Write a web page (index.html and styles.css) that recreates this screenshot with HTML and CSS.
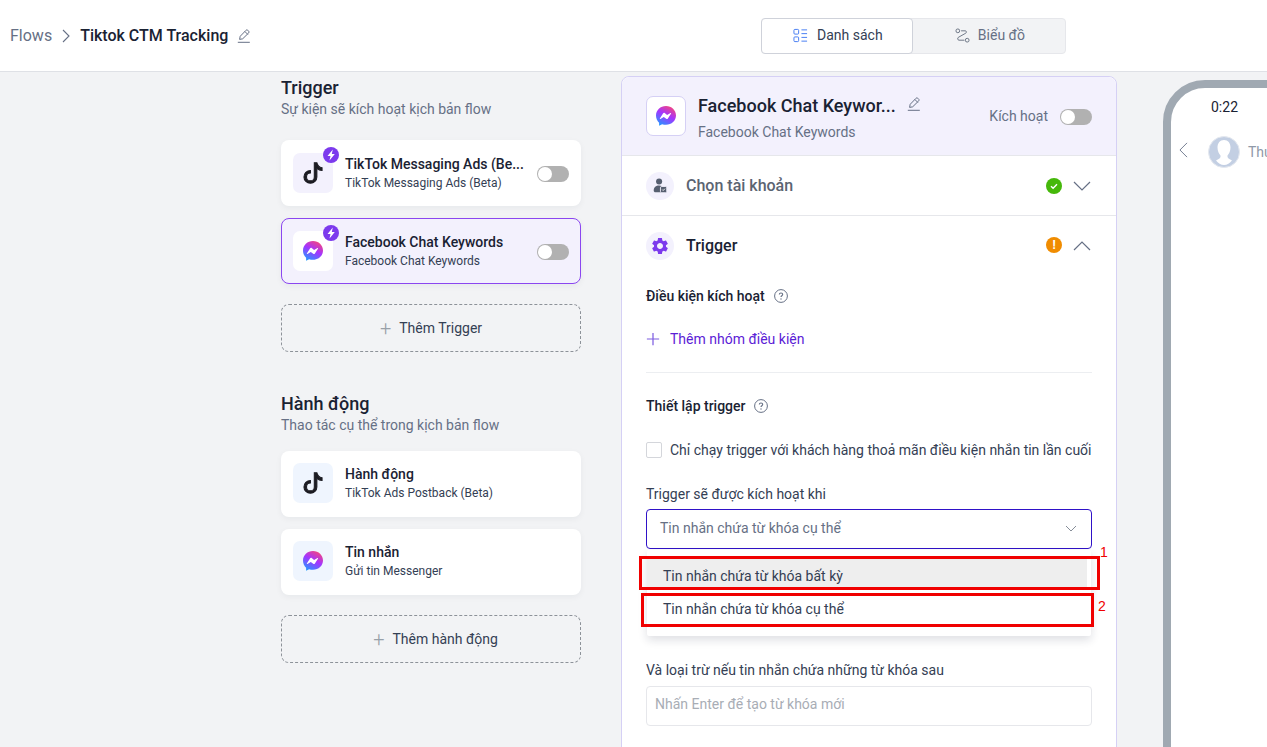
FILE: index.html
```html
<!DOCTYPE html>
<html lang="vi">
<head>
<meta charset="utf-8">
<title>Tiktok CTM Tracking</title>
<link rel="stylesheet" href="styles.css">
</head>
<body>
<svg class="defs" aria-hidden="true">
  <defs>
    <linearGradient id="mg" x1="0.75" y1="0" x2="0.2" y2="1">
      <stop offset="0" stop-color="#f5467c"/>
      <stop offset="0.45" stop-color="#a533ff"/>
      <stop offset="1" stop-color="#1f9bff"/>
    </linearGradient>
    <symbol id="messenger" viewBox="0 0 20 20">
      <path fill="url(#mg)" d="M10 0C4.4 0 0 4.1 0 9.6c0 2.9 1.2 5.4 3.1 7.1v3.1l3-1.6c1.2.4 2.5.6 3.9.6 5.600 0 10-4.100 10-9.200C20 4.100 15.600 0 10 0z"/>
      <path fill="#fff" d="M3.800 12.400l3.200-5c.4-.6 1.200-.7 1.700-.3l2.400 1.800 3.400-1.900c.4-.2.8.2.6.5l-3.200 5c-.4.6-1.200.7-1.700.3L7.800 11l-3.400 1.900c-.4.2-.8-.2-.6-.5z"/>
    </symbol>
    <symbol id="tiktok" viewBox="-0.5 -0.5 17 17">
      <path d="M9 0h1.980c.144.715.54 1.617 1.235 2.512C12.895 3.389 13.797 4 15 4v2c-1.753 0-3.070-.814-4-1.829V11a5 5 0 1 1-5-5v2a3 3 0 1 0 3 3V0Z"/>
    </symbol>
    <symbol id="bolt" viewBox="0 0 16 16">
      <circle cx="8" cy="8" r="8" fill="#7c3aed"/>
      <path fill="#fff" d="M9.800 2.500L4.500 9h3l-1 4.500L11.800 7H8.800l1-4.500z"/>
    </symbol>
    <symbol id="pencil" viewBox="0 0 14 14">
      <path fill="none" stroke="currentColor" stroke-width="1" d="M2.600 10.400L3.200 7.300 9 1.300c.6-.6 1.200-.6 1.700-.1l1 1c.5.5.5 1.200 0 1.700L5.700 9.800zM7.900 2.500l3 3M.8 13.300h12"/>
    </symbol>
    <symbol id="help" viewBox="0 0 14 14">
      <circle cx="7" cy="7" r="6.400" fill="none" stroke="currentColor" stroke-width="1"/>
      <path fill="none" stroke="currentColor" stroke-width="1.100" d="M5.300 5.600c0-1 .8-1.600 1.700-1.600s1.700.6 1.700 1.500c0 1.200-1.700 1.300-1.700 2.500"/>
      <circle cx="7" cy="10" r=".7" fill="currentColor"/>
    </symbol>
    <symbol id="gear" viewBox="0 0 24 24">
      <path d="M19.140 12.940c.04-.3.06-.61.06-.94 0-.32-.02-.64-.07-.94l2.030-1.580c.18-.14.23-.41.12-.61l-1.920-3.320c-.12-.22-.37-.29-.59-.22l-2.390.96c-.5-.38-1.030-.7-1.620-.94l-.36-2.540c-.04-.24-.24-.41-.48-.41h-3.840c-.24 0-.43.17-.47.41l-.36 2.540c-.59.24-1.130.57-1.620.94l-2.390-.96c-.22-.08-.47 0-.59.22L2.740 8.870c-.12.21-.08.47.12.61l2.030 1.580c-.05.3-.09.63-.09.94s.02.64.07.94l-2.030 1.580c-.18.14-.23.41-.12.61l1.920 3.320c.12.22.37.29.59.22l2.390-.96c.5.38 1.030.7 1.620.94l.36 2.540c.05.24.24.41.48.41h3.840c.24 0 .44-.17.47-.41l.36-2.540c.59-.24 1.130-.56 1.620-.94l2.390.96c.22.08.47 0 .59-.22l1.920-3.320c.12-.22.07-.47-.12-.61l-2.010-1.580zM12 15.600c-1.980 0-3.600-1.620-3.600-3.600s1.620-3.600 3.600-3.600 3.600 1.620 3.600 3.600-1.620 3.600-3.600 3.600z"/>
    </symbol>
  </defs>
</svg>

<div class="app">
  <header class="topbar">
    <nav class="crumbs">
      <span class="crumb-root">Flows</span>
      <svg class="crumb-sep" viewBox="0 0 8 14"><path d="M1 1l6 6-6 6" fill="none" stroke="currentColor" stroke-width="1.100"/></svg>
      <span class="crumb-title">Tiktok CTM Tracking</span>
      <svg class="crumb-edit"><use href="#pencil"/></svg>
    </nav>
    <div class="tabs">
      <div class="tab tab-on">
        <svg class="tab-icon" viewBox="0 0 16 16" fill="none" stroke="#3f78f2" stroke-width="1"><rect x="1" y="1.500" width="5" height="5" rx="1"/><rect x="1" y="9.500" width="5" height="5" rx="1"/><path d="M9 2h6M9 6h6M9 10h6M9 14h6"/></svg>
        <span>Danh sách</span>
      </div>
      <div class="tab">
        <svg class="tab-icon" viewBox="0 0 16 16" fill="none" stroke="#667080" stroke-width="1"><circle cx="3" cy="3" r="2"/><circle cx="13" cy="13" r="2"/><path d="M6.500 3h4.500c1.300 0 1.500 1.800.5 2.500L3.500 10c-1 .7-.8 3 .7 3H10"/></svg>
        <span>Biểu đồ</span>
      </div>
    </div>
  </header>

  <main class="workspace">
    <section class="flow-col">
      <h2 class="col-title">Trigger</h2>
      <p class="col-sub">Sự kiện sẽ kích hoạt kịch bản flow</p>
      <div class="cards">
        <article class="card">
          <div class="card-icon tint-lilac">
            <svg class="ico-tt"><use href="#tiktok"/></svg>
            <svg class="bolt"><use href="#bolt"/></svg>
          </div>
          <div class="card-text">
            <div class="card-name">TikTok Messaging Ads (Be...</div>
            <div class="card-desc">TikTok Messaging Ads (Beta)</div>
          </div>
          <span class="switch"></span>
        </article>
        <article class="card card-on">
          <div class="card-icon tint-white">
            <svg class="ico-ms"><use href="#messenger"/></svg>
            <svg class="bolt"><use href="#bolt"/></svg>
          </div>
          <div class="card-text">
            <div class="card-name">Facebook Chat Keywords</div>
            <div class="card-desc">Facebook Chat Keywords</div>
          </div>
          <span class="switch"></span>
        </article>
      </div>
      <div class="add-box"><span class="add-plus">+</span>Thêm Trigger</div>

      <h2 class="col-title col-title-2">Hành động</h2>
      <p class="col-sub">Thao tác cụ thể trong kịch bản flow</p>
      <div class="cards cards-action">
        <article class="card card-action">
          <div class="card-icon tint-blue"><svg class="ico-tt"><use href="#tiktok"/></svg></div>
          <div class="card-text">
            <div class="card-name">Hành động</div>
            <div class="card-desc">TikTok Ads Postback (Beta)</div>
          </div>
        </article>
        <article class="card card-action">
          <div class="card-icon tint-blue"><svg class="ico-ms"><use href="#messenger"/></svg></div>
          <div class="card-text">
            <div class="card-name">Tin nhắn</div>
            <div class="card-desc">Gửi tin Messenger</div>
          </div>
        </article>
      </div>
      <div class="add-box add-box-action"><span class="add-plus">+</span>Thêm hành động</div>
    </section>

    <section class="panel">
      <div class="panel-head">
        <div class="panel-logo"><svg class="ico-ms"><use href="#messenger"/></svg></div>
        <div class="panel-titles">
          <div class="panel-title-row">
            <span class="panel-title">Facebook Chat Keywor...</span>
            <svg class="panel-edit"><use href="#pencil"/></svg>
          </div>
          <div class="panel-sub">Facebook Chat Keywords</div>
        </div>
        <span class="panel-status">Kích hoạt</span>
        <span class="switch"></span>
      </div>

      <div class="acc-row">
        <span class="acc-icon">
          <svg viewBox="0 0 20 20" class="acc-glyph"><circle cx="9" cy="5" r="3.400" fill="#565f70"/><path fill="#565f70" d="M3 15c0-3.500 2.500-5.500 6-5.500 1.200 0 2.200.2 3 .6V17H5c-1.200 0-2-.8-2-2z"/><rect x="10.500" y="10.500" width="7" height="7" rx="1.500" fill="#565f70" stroke="#f3f1fd"/><path d="M12.500 14l1 1 2-2" stroke="#fff" fill="none"/></svg>
        </span>
        <span class="acc-label acc-muted">Chọn tài khoản</span>
        <span class="dot dot-ok"><svg viewBox="0 0 16 16"><path d="M5 8.200l2.100 2L11 6.300" fill="none" stroke="#fff" stroke-width="1.400"/></svg></span>
        <svg class="chev" viewBox="0 0 18 10"><path d="M1 1l8 8 8-8" fill="none" stroke="currentColor" stroke-width="1.200"/></svg>
      </div>

      <div class="acc-row acc-open">
        <span class="acc-icon"><svg class="acc-gear"><use href="#gear"/></svg></span>
        <span class="acc-label">Trigger</span>
        <span class="dot dot-warn">!</span>
        <svg class="chev" viewBox="0 0 18 10"><path d="M1 9l8-8 8 8" fill="none" stroke="currentColor" stroke-width="1.200"/></svg>
      </div>

      <div class="panel-body">
        <div class="sec-head">Điều kiện kích hoạt <svg class="help"><use href="#help"/></svg></div>
        <div class="add-group">
          <svg class="add-group-plus" viewBox="0 0 16 16"><path d="M8 1v14M1 8h14" stroke="#7c5ce0" stroke-width="1.400"/></svg>
          Thêm nhóm điều kiện
        </div>
        <hr class="rule">
        <div class="sec-head">Thiết lập trigger <svg class="help"><use href="#help"/></svg></div>
        <label class="check-row"><span class="check"></span>Chỉ chạy trigger với khách hàng thoả mãn điều kiện nhắn tin lần cuối</label>
        <div class="field-label">Trigger sẽ được kích hoạt khi</div>
        <div class="select">
          <span>Tin nhắn chứa từ khóa cụ thể</span>
          <svg class="select-chev" viewBox="0 0 12 7"><path d="M1 1l5 5 5-5" fill="none" stroke="currentColor"/></svg>
          <div class="menu">
            <div class="menu-item menu-item-on">Tin nhắn chứa từ khóa bất kỳ</div>
            <div class="menu-item">Tin nhắn chứa từ khóa cụ thể</div>
          </div>
          <div class="mark mark-1"><span class="mark-num">1</span></div>
          <div class="mark mark-2"><span class="mark-num">2</span></div>
        </div>
        <div class="field-label field-label-2">Và loại trừ nếu tin nhắn chứa những từ khóa sau</div>
        <div class="input">Nhấn Enter để tạo từ khóa mới</div>
      </div>
    </section>

    <section class="phone">
      <div class="phone-time">0:22</div>
      <div class="phone-chat">
        <svg class="phone-back" viewBox="0 0 10 18"><path d="M9 1L1 9l8 8" fill="none" stroke="currentColor"/></svg>
        <svg class="phone-avatar" viewBox="0 0 32 32"><circle cx="16" cy="16" r="15.500" fill="#c3cfe3" stroke="#e4e8ef"/><path fill="#fff" d="M16 4c-4 0-6.500 3-6.500 7.500 0 3.500 1.500 6.500 3 8 .5 2-1 3.500-4.500 5 2 2.500 5 4.500 8 4.500s6-2 8-4.500c-3.500-1.500-5-3-4.500-5 1.500-1.500 3-4.500 3-8C22.500 7 20 4 16 4z"/></svg>
        <span class="phone-name">Thu</span>
      </div>
    </section>
  </main>
</div>
</body>
</html>
```

FILE: styles.css
```css
* { box-sizing: border-box; }
html, body { margin: 0; height: 100%; overflow: hidden; }
body { font-family: Roboto, "Liberation Sans", sans-serif; color: #1a2233; background: #f2f3f5; font-size: 14px; }
.defs { position: absolute; width: 0; height: 0; }
.app { height: 747px; display: flex; flex-direction: column; }

.topbar { height: 72px; flex: none; background: #fff; border-bottom: 1px solid #dfe1e6; display: flex; align-items: center; padding: 0 0 1px 10px; }
.crumbs { display: flex; align-items: center; }
.crumb-root { font-size: 16px; color: #667085; }
.crumb-sep { width: 8px; height: 14px; margin: 1px 10px 0 10px; color: #667085; }
.crumb-title { font-size: 16px; font-weight: 500; color: #1a2233; }
.crumb-edit { width: 14px; height: 14px; margin: 1px 0 0 9px; color: #667085; }

.tabs { display: flex; margin: 2px 0 0 510px; height: 36px; background: #f2f3f5; border: 1px solid #e6e7eb; border-radius: 4px; width: 305px; }
.tab { flex: none; width: 152px; display: flex; align-items: center; justify-content: center; gap: 9px; padding: 0 0 2px 1px; color: #667085; font-size: 14px; }
.tab-on { background: #fff; border: 1px solid #cfd2da; border-radius: 4px; color: #344054; margin: -1px 0 -1px -1px; }
.tab-icon { width: 15px; height: 15px; }
.tab + .tab { gap: 8px; }

.workspace { flex: 1; min-height: 0; display: flex; overflow: hidden; padding-left: 281px; align-items: flex-start; }

.flow-col { width: 300px; flex: none; padding-top: 4px; }
.col-title { margin: 0; font-size: 18px; line-height: 24px; font-weight: 500; color: #1a2233; }
.col-title-2 { margin-top: 40px; }
.col-sub { margin: 0; font-size: 14px; line-height: 18px; color: #667085; }
.cards { margin-top: 22px; display: flex; flex-direction: column; gap: 12px; }
.cards-action { margin-top: 17px; }
.card { height: 66px; background: #fff; border-radius: 8px; box-shadow: 0 2px 6px rgba(20, 30, 60, 0.05); display: flex; align-items: center; padding: 0 12px; }
.card-action { padding-bottom: 2px; }
.card-on { background: #f3f1fd; border: 1px solid #8b46f0; padding: 0 11px; }
.card-icon { width: 40px; height: 40px; flex: none; border-radius: 7px; display: flex; align-items: center; justify-content: center; position: relative; }
.tint-lilac { background: #f3f1fd; }
.tint-white { background: #fff; }
.tint-blue { background: #eff5fe; }
.ico-tt { width: 22px; height: 22px; fill: #1c1c22; stroke: #1c1c22; stroke-width: 0.8; margin-top: -1px; }
.ico-ms { width: 20px; height: 20px; }
.bolt { position: absolute; width: 16px; height: 16px; top: -6px; right: -6px; }
.card-text { flex: 1; min-width: 0; margin-left: 12px; }
.card-name { font-size: 14px; line-height: 18px; font-weight: 500; color: #1a2233; white-space: nowrap; }
.card-desc { font-size: 12px; line-height: 18px; color: #344054; white-space: nowrap; margin-top: 1px; }
.switch { flex: none; width: 32px; height: 16px; margin-top: 2px; border-radius: 8px; background: #b1b1b1; position: relative; }
.switch::after { content: ""; position: absolute; left: 1px; top: 1px; width: 14px; height: 14px; border-radius: 50%; background: #fff; }
.add-box { margin-top: 20px; height: 48px; border: 1px dashed #8d9299; border-radius: 8px; display: flex; align-items: center; justify-content: center; color: #344054; font-size: 14px; }
.add-box-action { padding-left: 9px; }
.add-plus { color: #98a0a8; font-size: 20px; font-weight: 300; line-height: 1; margin-right: 8px; }

.panel { width: 496px; flex: none; margin: 4px 0 0 40px; height: 700px; background: #fff; border: 1px solid #d5d0f5; border-radius: 8px 8px 0 0; }
.panel-head { height: 79px; background: #f3f1fd; border-bottom: 1px solid #e6e7eb; border-radius: 8px 8px 0 0; display: flex; align-items: center; padding: 0 24px; }
.panel-logo { width: 40px; height: 40px; flex: none; background: #fff; border: 1px solid #d5d0f5; border-radius: 7px; display: flex; align-items: center; justify-content: center; }
.panel-titles { margin-left: 12px; padding-top: 2px; flex: 1; min-width: 0; }
.panel-title-row { display: flex; align-items: flex-start; }
.panel-title { font-size: 18px; line-height: 24px; font-weight: 500; color: #1a2233; }
.panel-edit { width: 14px; height: 14px; color: #667085; margin: 3px 0 0 11px; }
.panel-sub { font-size: 14px; line-height: 18px; color: #667085; margin-top: 5px; }
.panel-status { font-size: 14px; color: #667085; margin-right: 12px; }

.acc-row { height: 60px; border-bottom: 1px solid #e6e7eb; display: flex; align-items: center; padding: 0 24px; }
.acc-open { border-bottom: 0; }
.acc-open .acc-label, .acc-open .dot { margin-bottom: 2px; }
.acc-icon { width: 28px; height: 28px; flex: none; border-radius: 50%; background: #f3f1fd; display: flex; align-items: center; justify-content: center; }
.acc-glyph { width: 18px; height: 18px; }
.acc-gear { width: 20px; height: 20px; fill: #7c3aed; }
.acc-label { flex: 1; margin-left: 12px; font-size: 16px; font-weight: 500; color: #1a2233; }
.acc-muted { color: #5b6472; }
.dot { width: 16px; height: 16px; flex: none; border-radius: 50%; display: flex; align-items: center; justify-content: center; color: #fff; font-size: 12px; font-weight: 700; margin-right: 11px; }
.dot svg { width: 16px; height: 16px; }
.dot-ok { background: #45b80a; }
.dot-warn { background: #f08c00; }
.chev { width: 18px; height: 10px; flex: none; color: #667085; margin-right: 1px; }

.panel-body { padding: 11px 24px 0; }
.sec-head { display: flex; align-items: center; gap: 9px; font-size: 14px; line-height: 18px; font-weight: 500; color: #1a2233; }
.help { width: 14px; height: 14px; color: #667085; }
.add-group { display: flex; align-items: center; gap: 10px; margin-top: 25px; color: #5b21d6; font-size: 14px; line-height: 18px; }
.add-group-plus { width: 14px; height: 14px; }
.rule { border: 0; border-top: 1px solid #eceef1; margin: 24px 0 24px; }
.check-row { display: flex; align-items: center; gap: 8px; margin-top: 26px; color: #344054; font-size: 14px; line-height: 18px; white-space: nowrap; }
.check { width: 16px; height: 16px; flex: none; background: #fff; border: 1px solid #d4d6db; border-radius: 2px; }
.field-label { margin-top: 26px; font-size: 14px; line-height: 18px; color: #344054; }
.field-label-2 { margin-top: 112px; }
.select { position: relative; height: 40px; margin-top: 6px; border: 1px solid #2f12c8; border-radius: 4px; display: flex; align-items: center; justify-content: space-between; padding: 0 14px 2px 13px; color: #667085; font-size: 14px; }
.select-chev { width: 12px; height: 7px; color: #868d98; }
.menu { position: absolute; left: 0; right: 0; top: 40px; height: 86px; background: #fff; border-radius: 2px; padding: 9px 4px 0 0; box-shadow: 0 4px 10px rgba(20, 30, 60, 0.14); color: #344054; }
.menu-item { height: 33px; padding: 9px 0 0 16px; line-height: 18px; }
.menu-item-on { background: #eeeeee; height: 30px; margin-bottom: 2px; padding-top: 8px; }
.mark { position: absolute; border: 3px solid #f00000; }
.mark-1 { left: -8px; top: 46px; width: 461px; height: 34px; }
.mark-2 { left: -6px; top: 83px; width: 453px; height: 34px; }
.mark-num { position: absolute; color: #f00000; font-size: 14px; line-height: 14px; font-family: "Liberation Sans", sans-serif; }
.mark-1 .mark-num { left: 458px; top: -14px; }
.mark-2 .mark-num { left: 454px; top: 3px; }
.input { margin-top: 7px; height: 40px; border: 1px solid #e6e7eb; border-radius: 4px; display: flex; align-items: center; padding: 0 0 4px 8px; color: #a8adb5; font-size: 14px; }

.phone { flex: none; width: 300px; height: 760px; margin: 8px 0 0 46px; border: 8px solid #a0a9b2; border-radius: 42px; background: #fff; }
.phone-time { font-size: 14px; line-height: 18px; color: #1a2233; margin: 10px 0 0 40px; }
.phone-chat { display: flex; align-items: center; margin-top: 20px; padding-left: 8px; }
.phone-back { width: 9px; height: 16px; color: #667085; margin-top: -4px; }
.phone-avatar { width: 32px; height: 32px; margin-left: 20px; }
.phone-name { margin-left: 8px; font-size: 14px; color: #8f99a8; white-space: nowrap; }
```
